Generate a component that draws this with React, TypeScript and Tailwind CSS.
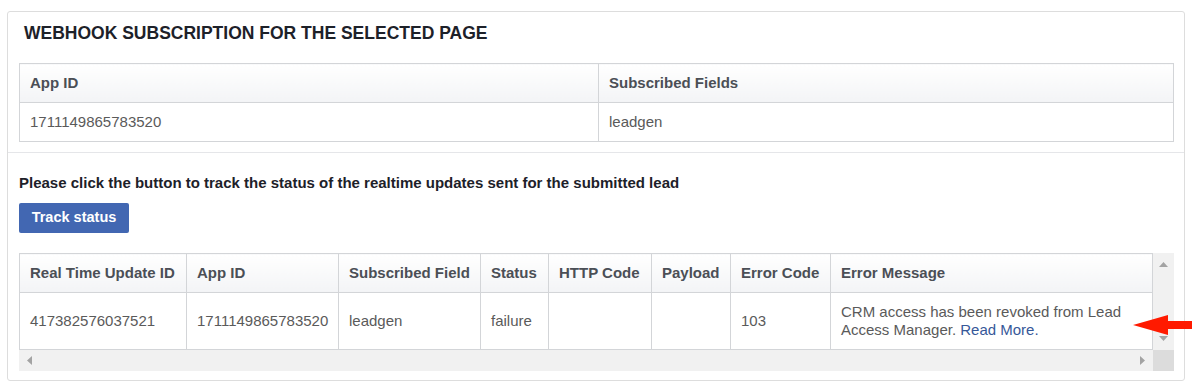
import React from "react";

const th = "border border-[#d3d5d8] bg-gradient-to-b from-white to-[#f3f4f6] px-[10px] py-[9px] text-left text-[15px] leading-[20px] font-bold text-[#4b4f56] whitespace-nowrap";
const td = "border border-[#d3d5d8] bg-white px-[10px] py-[9px] text-left text-[15px] leading-[20px] font-normal text-[#5a5a5a] align-middle";

export default function App() {
  return (
    <div className="relative w-[1192px] h-[391px] bg-white pt-[11px] pl-[7px] font-['Liberation_Sans',Arial,sans-serif]">
      <div className="w-[1178px] rounded-[3px] border border-[#dddddd]">
        <div className="px-[11px] pt-[12px] pb-[10px]">
          <h2 className="pl-[5px] text-[17.5px] leading-[19px] font-bold text-[#1d2129]">
            WEBHOOK SUBSCRIPTION FOR THE SELECTED PAGE
          </h2>
          <table className="mt-[20px] w-[1155px] table-fixed border-collapse">
            <colgroup>
              <col className="w-[579px]" />
              <col />
            </colgroup>
            <thead>
              <tr>
                <th className={th}>App ID</th>
                <th className={th}>Subscribed Fields</th>
              </tr>
            </thead>
            <tbody>
              <tr>
                <td className={td}>1711149865783520</td>
                <td className={td}>leadgen</td>
              </tr>
            </tbody>
          </table>
        </div>
        <div className="border-t border-[#e5e6e9] px-[11px] pt-[20px] pb-[9px]">
          <p className="text-[15px] leading-[20px] font-bold text-[#1d2129]">
            Please click the button to track the status of the realtime updates sent for the submitted lead
          </p>
          <button className="mt-[10px] h-[30px] w-[110px] rounded-[2px] bg-[#4267b2] text-[14.5px] font-bold text-white">
            Track status
          </button>
          <div className="mt-[20px] w-[1155px]">
            <div className="flex">
              <table className="w-[1134px] table-fixed border-collapse">
                <colgroup>
                  <col className="w-[167px]" />
                  <col className="w-[152px]" />
                  <col className="w-[142px]" />
                  <col className="w-[68px]" />
                  <col className="w-[103px]" />
                  <col className="w-[79px]" />
                  <col className="w-[100px]" />
                  <col />
                </colgroup>
                <thead>
                  <tr>
                    <th className={th}>Real Time Update ID</th>
                    <th className={th}>App ID</th>
                    <th className={th}>Subscribed Field</th>
                    <th className={th}>Status</th>
                    <th className={th}>HTTP Code</th>
                    <th className={th}>Payload</th>
                    <th className={th}>Error Code</th>
                    <th className={th}>Error Message</th>
                  </tr>
                </thead>
                <tbody>
                  <tr>
                    <td className={td}>417382576037521</td>
                    <td className={td}>1711149865783520</td>
                    <td className={td}>leadgen</td>
                    <td className={td}>failure</td>
                    <td className={td}></td>
                    <td className={td}></td>
                    <td className={td}>103</td>
                    <td className="border border-[#d3d5d8] bg-white px-[10px] py-[10px] text-left text-[15px] leading-[18px] text-[#5a5a5a]">
                      CRM access has been revoked from Lead Access Manager.{" "}
                      <a className="text-[#365899]">Read More.</a>
                    </td>
                  </tr>
                </tbody>
              </table>
              <div className="flex w-[21px] flex-col items-center justify-between bg-[#f1f1f1] pt-[9px] pb-[9px]">
                <svg width="9" height="5" viewBox="0 0 9 5">
                  <polygon points="0,5 4.5,0 9,5" fill="#a3a3a3" />
                </svg>
                <svg width="9" height="5" viewBox="0 0 9 5">
                  <polygon points="0,0 9,0 4.5,5" fill="#a3a3a3" />
                </svg>
              </div>
            </div>
            <div className="flex h-[21px]">
              <div className="flex flex-1 items-center justify-between bg-[#f1f1f1] pl-[8px] pr-[8px]">
                <svg width="5" height="9" viewBox="0 0 5 9">
                  <polygon points="5,0 0,4.5 5,9" fill="#a3a3a3" />
                </svg>
                <svg width="5" height="9" viewBox="0 0 5 9">
                  <polygon points="0,0 5,4.5 0,9" fill="#a3a3a3" />
                </svg>
              </div>
              <div className="w-[21px] bg-[#dcdcdc]" />
            </div>
          </div>
        </div>
      </div>
      <svg className="absolute left-[1133px] top-[315px]" width="59" height="20" viewBox="0 0 59 20">
        <polygon points="0,10 35,0 35,6 59,6 59,14 35,14 35,20" fill="#ff1a00" />
      </svg>
    </div>
  );
}
